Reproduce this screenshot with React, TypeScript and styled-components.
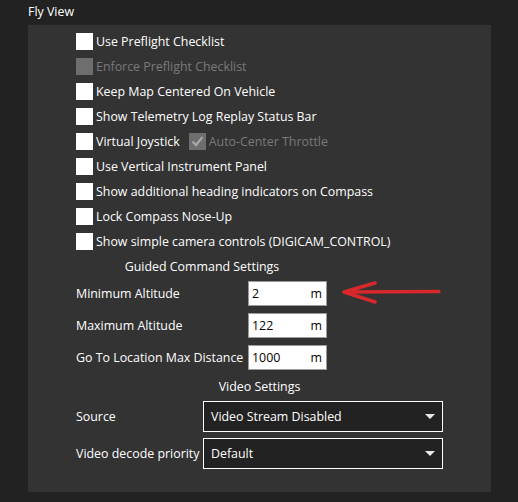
import styled, { createGlobalStyle } from "styled-components";

const GlobalStyle = createGlobalStyle`
  body {
    margin: 0;
    background: #222222;
    font-family: "Open Sans", "Noto Sans", sans-serif;
    font-size: 12.4px;
    color: #ffffff;
  }
`;

const Page = styled.div`
  width: 518px;
  height: 502px;
  padding: 0 27px 0 28px;
  box-sizing: border-box;
  display: flex;
  flex-direction: column;
`;

const Title = styled.div`
  height: 25px;
  line-height: 24px;
`;

const Panel = styled.div`
  background: #333333;
  height: 467px;
  padding: 8px 48px 0 48px;
  box-sizing: border-box;
  display: flex;
  flex-direction: column;
`;

const CheckRow = styled.div`
  display: flex;
  align-items: center;
  height: 17px;
  margin-bottom: 8px;
  gap: 3px;
`;

const Box = styled.span<{ $disabled?: boolean }>`
  width: 17px;
  height: 17px;
  flex: none;
  background: ${(p) => (p.$disabled ? "#6e6e6e" : "#ffffff")};
  display: flex;
  align-items: center;
  justify-content: center;
`;

const CheckText = styled.span<{ $disabled?: boolean }>`
  color: ${(p) => (p.$disabled ? "#7a7a7a" : "#ffffff")};
  white-space: nowrap;
  margin-right: 6px;
`;

const SectionTitle = styled.div<{ $width: number; $top: number }>`
  width: ${(p) => p.$width}px;
  text-align: center;
  height: 24px;
  line-height: 24px;
  margin-top: ${(p) => p.$top}px;
`;

const FieldGrid = styled.div`
  display: grid;
  grid-template-columns: 172px 79px 1fr;
  row-gap: 7px;
  align-items: center;
  margin-top: 1px;
`;

const FieldLabel = styled.span`
  white-space: nowrap;
`;

const NumBox = styled.div`
  height: 25px;
  box-sizing: border-box;
  background: #ffffff;
  border: 1px solid #9a9a9a;
  color: #000000;
  display: flex;
  align-items: center;
  justify-content: space-between;
  padding: 0 4px 0 3px;
`;

const ArrowCell = styled.div`
  display: flex;
  align-items: center;
  padding-left: 15px;
`;

const ComboGrid = styled.div`
  display: grid;
  grid-template-columns: 127px 240px;
  row-gap: 6px;
  align-items: center;
  margin-top: 2px;
`;

const Combo = styled.div`
  height: 31px;
  box-sizing: border-box;
  background: #222222;
  border: 1px solid #ffffff;
  display: flex;
  align-items: center;
  justify-content: space-between;
  padding: 0 7px 0 7px;
`;

const Caret = styled.span`
  width: 0;
  height: 0;
  border-left: 5px solid transparent;
  border-right: 5px solid transparent;
  border-top: 5px solid #e8e8e8;
`;

const checks = [
  { label: "Use Preflight Checklist" },
  { label: "Enforce Preflight Checklist", disabled: true },
  { label: "Keep Map Centered On Vehicle" },
  { label: "Show Telemetry Log Replay Status Bar" },
  { label: "Virtual Joystick", extra: "Auto-Center Throttle" },
  { label: "Use Vertical Instrument Panel" },
  { label: "Show additional heading indicators on Compass" },
  { label: "Lock Compass Nose-Up" },
  { label: "Show simple camera controls (DIGICAM_CONTROL)" },
];

const fields = [
  { label: "Minimum Altitude", value: "2" },
  { label: "Maximum Altitude", value: "122" },
  { label: "Go To Location Max Distance", value: "1000" },
];

const Tick = () => (
  <svg width="15" height="15" viewBox="0 0 15 15">
    <path d="M2.5 7.5 L6 11 L12.5 3" fill="none" stroke="#a8a8a8" strokeWidth="2.2" />
  </svg>
);

const RedArrow = () => (
  <svg width="100" height="26" viewBox="0 0 100 26">
    <path
      d="M2 12 L97 11.5 M2 12 L33 3 M2 12 L33 22"
      fill="none"
      stroke="#d8282b"
      strokeWidth="3.5"
      strokeLinecap="round"
    />
  </svg>
);

export default function App() {
  return (
    <Page>
      <GlobalStyle />
      <Title>Fly View</Title>
      <Panel>
        {checks.map((c) => (
          <CheckRow key={c.label}>
            <Box $disabled={c.disabled} />
            <CheckText $disabled={c.disabled}>{c.label}</CheckText>
            {c.extra && (
              <>
                <Box $disabled>
                  <Tick />
                </Box>
                <CheckText $disabled>{c.extra}</CheckText>
              </>
            )}
          </CheckRow>
        ))}
        <SectionTitle $width={252} $top={-3}>
          Guided Command Settings
        </SectionTitle>
        <FieldGrid>
          {fields.map((f, i) => (
            <>
              <FieldLabel key={f.label}>{f.label}</FieldLabel>
              <NumBox>
                <span>{f.value}</span>
                <span>m</span>
              </NumBox>
              <ArrowCell>{i === 0 && <RedArrow />}</ArrowCell>
            </>
          ))}
        </FieldGrid>
        <SectionTitle $width={367} $top={5}>
          Video Settings
        </SectionTitle>
        <ComboGrid>
          <FieldLabel>Source</FieldLabel>
          <Combo>
            <span>Video Stream Disabled</span>
            <Caret />
          </Combo>
          <FieldLabel>Video decode priority</FieldLabel>
          <Combo>
            <span>Default</span>
            <Caret />
          </Combo>
        </ComboGrid>
      </Panel>
    </Page>
  );
}
